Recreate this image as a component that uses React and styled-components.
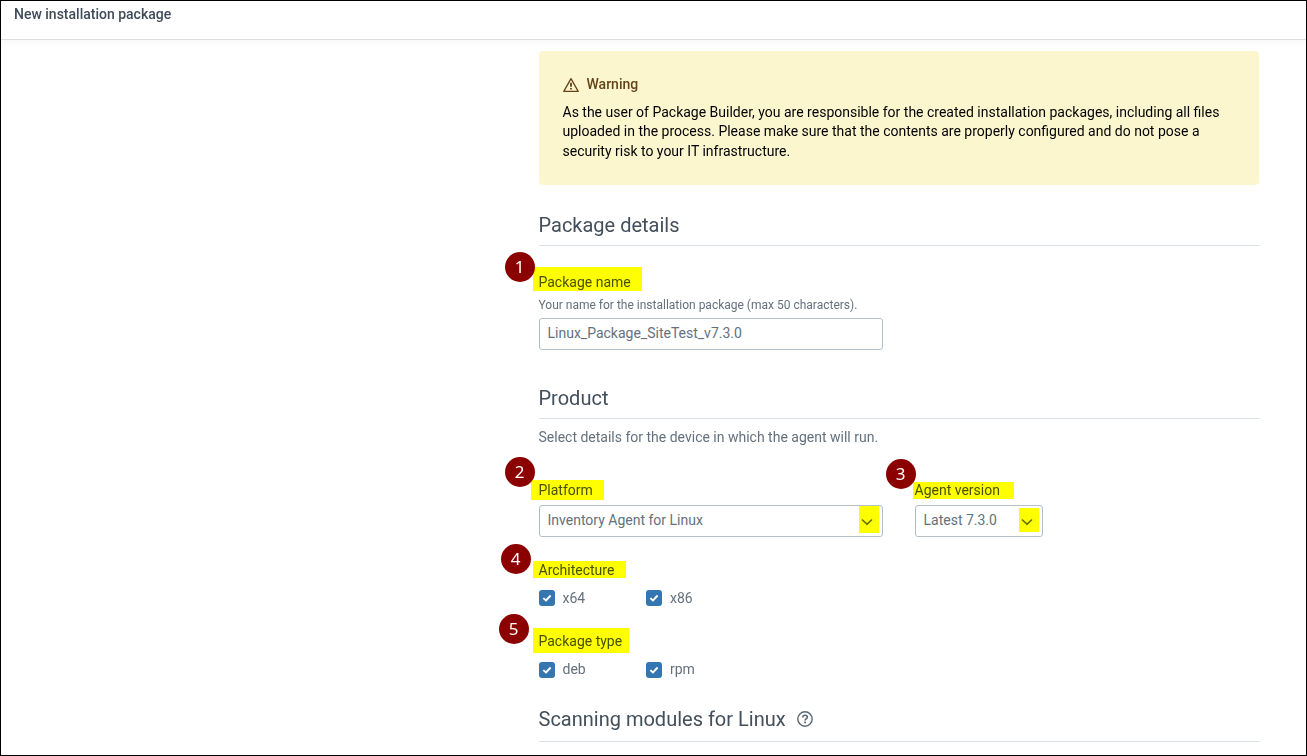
import React from "react";
import styled, { createGlobalStyle } from "styled-components";

const GlobalStyle = createGlobalStyle`
  *, *::before, *::after { box-sizing: border-box; }
  body {
    margin: 0;
    background: #fff;
    font-family: Roboto, "Liberation Sans", sans-serif;
    font-size: 14px;
    line-height: 20px;
    color: #64717d;
  }
`;

const Page = styled.div`
  display: flex;
  flex-direction: column;
  height: 756px;
  overflow: hidden;
  border: 1px solid #000;
  background: #fff;
`;

const Header = styled.header`
  flex: none;
  height: 39px;
  padding: 3px 13px;
  border-bottom: 1px solid #dcdfe1;
  box-shadow: 0 2px 8px rgba(0, 0, 0, 0.04);
  color: #3f4b59;
  font-weight: 500;
`;

const Content = styled.main`
  width: 720px;
  margin-left: 537.5px;
  padding-top: 11px;
`;

const Warning = styled.section`
  height: 134px;
  padding: 24px;
  border-radius: 4px;
  background: #fcf6cf;
  color: #000;
  line-height: 19.6px;
`;

const WarningTitle = styled.div`
  display: flex;
  align-items: center;
  gap: 8px;
  margin-bottom: 8px;
  color: #634319;
  font-weight: 500;

  svg { display: block; }
`;

const WarningText = styled.p`
  margin: 0;
`;

const SectionTitle = styled.h2`
  display: flex;
  align-items: center;
  gap: 11px;
  margin: ${(p) => p.$top}px 0 0;
  padding-bottom: ${(p) => p.$bottom || 6}px;
  border-bottom: 1px solid #d8dfe6;
  color: #434f5a;
  font-size: 20px;
  font-weight: 400;
  line-height: 28px;
`;

const Description = styled.p`
  margin: 8px 0 0;
`;

const Field = styled.div`
  width: ${(p) => p.$width || "auto"};
  margin-top: ${(p) => p.$top || 0}px;
`;

const FieldRow = styled.div`
  display: flex;
  gap: 32px;
  margin-top: 33px;
`;

const Label = styled.div`
  position: relative;
  color: #46525d;
`;

const Hint = styled.div`
  margin-top: 5px;
  font-size: 12px;
  line-height: 16px;
`;

const Control = styled.div`
  position: relative;
  display: flex;
  align-items: center;
  justify-content: space-between;
  width: 100%;
  height: 32px;
  margin-top: 5px;
  padding: 0 8px 2px;
  border: 1px solid #b3bfcb;
  border-radius: 3px;
  background: #fff;
`;

const Chevron = styled.svg`
  display: block;
  margin-top: 3px;
`;

const Options = styled.div`
  display: grid;
  grid-template-columns: 107.5px 107.5px;
  margin-top: ${(p) => p.$top}px;
`;

const Option = styled.div`
  display: flex;
  align-items: flex-start;
  gap: 8px;
`;

const Box = styled.span`
  display: grid;
  place-items: center;
  width: 16px;
  height: 16px;
  margin-top: ${(p) => p.$top}px;
  border-radius: 3px;
  background: #3576b1;
`;

const Highlight = styled.span`
  position: absolute;
  left: ${(p) => p.$x}px;
  top: ${(p) => p.$y}px;
  width: ${(p) => p.$w}px;
  height: ${(p) => p.$h}px;
  background: #ff0;
  mix-blend-mode: multiply;
`;

const Badge = styled.span`
  position: absolute;
  left: ${(p) => p.$x}px;
  top: ${(p) => p.$y}px;
  width: 30px;
  height: 30px;
  border-radius: 50%;
  background: #8b0000;
  color: #fff;
  font: 17px/29px "Noto Sans", "DejaVu Sans", sans-serif;
  text-align: center;
`;

function WarningIcon() {
  return (
    <svg width="16" height="16" viewBox="0 0 16 16" fill="none" stroke="currentColor" strokeLinejoin="round">
      <path d="M8 1.6 15.2 14.4H.8Z" strokeWidth="1.3" />
      <path d="M8 5.8v4M8 10.9v1.7" strokeWidth="1.8" />
    </svg>
  );
}

function HelpIcon() {
  return (
    <svg width="16" height="16" viewBox="0 0 16 16" fill="none" stroke="#596773">
      <circle cx="8" cy="8" r="7.2" strokeWidth="1.4" />
      <path d="M5.8 6.4C5.8 5 6.7 4.2 8 4.2s2.3.8 2.3 2c0 1.6-2.2 1.7-2.2 3.3" strokeWidth="1.6" />
      <path d="M8.1 10.5v1.7" strokeWidth="1.7" />
    </svg>
  );
}

function Arrow() {
  return (
    <Chevron width="14" height="8" viewBox="0 0 14 8" fill="none" stroke="#5b6874" strokeWidth="1.5">
      <path d="M2 1.5 7 6.3l5-4.8" />
    </Chevron>
  );
}

function Check({ boxTop = 2, children }) {
  return (
    <Option>
      <Box $top={boxTop}>
        <svg width="10" height="10" viewBox="0 0 10 10" fill="none" stroke="#fff" strokeWidth="1.9">
          <path d="M1.3 5.1 4 7.5l4.6-5" />
        </svg>
      </Box>
      {children}
    </Option>
  );
}

function MarkedLabel({ number, badge, mark, children }) {
  return (
    <Label>
      {children}
      <Highlight $x={mark[0]} $y={mark[1]} $w={mark[2]} $h={mark[3]} />
      <Badge $x={badge[0]} $y={badge[1]}>{number}</Badge>
    </Label>
  );
}

export default function App() {
  return (
    <>
      <GlobalStyle />
      <Page>
        <Header>New installation package</Header>
        <Content>
          <Warning>
            <WarningTitle><WarningIcon />Warning</WarningTitle>
            <WarningText>
              As the user of Package Builder, you are responsible for the created installation packages, including all files
              uploaded in the process. Please make sure that the contents are properly configured and do not pose a
              security risk to your IT infrastructure.
            </WarningText>
          </Warning>

          <SectionTitle $top={26}>Package details</SectionTitle>
          <Field $top={26} $width="344px">
            <MarkedLabel number={1} badge={[-34, -20.5]} mark={[-6, -5, 109, 24]}>Package name</MarkedLabel>
            <Hint>Your name for the installation package (max 50 characters).</Hint>
            <Control>Linux_Package_SiteTest_v7.3.0</Control>
          </Field>

          <SectionTitle $top={34}>Product</SectionTitle>
          <Description>Select details for the device in which the agent will run.</Description>
          <FieldRow>
            <Field $width="344px">
              <MarkedLabel number={2} badge={[-34, -23.5]} mark={[-8, 0, 73, 20]}>Platform</MarkedLabel>
              <Control>
                Inventory Agent for Linux
                <Arrow />
                <Highlight $x={319} $y={0} $w={20} $h={27} />
              </Control>
            </Field>
            <Field $width="128px">
              <MarkedLabel number={3} badge={[-29, -21.5]} mark={[-2, 2, 101, 17]}>Agent version</MarkedLabel>
              <Control>
                Latest 7.3.0
                <Arrow />
                <Highlight $x={103} $y={2} $w={20} $h={24} />
              </Control>
            </Field>
          </FieldRow>

          <Field $top={23}>
            <MarkedLabel number={4} badge={[-38, -16.5]} mark={[-6, 1, 93, 17]}>Architecture</MarkedLabel>
            <Options $top={8}>
              <Check>x64</Check>
              <Check>x86</Check>
            </Options>
          </Field>
          <Field $top={23}>
            <MarkedLabel number={5} badge={[-40, -17.5]} mark={[-6, -3, 96, 25]}>Package type</MarkedLabel>
            <Options $top={8}>
              <Check boxTop={3}>deb</Check>
              <Check boxTop={3}>rpm</Check>
            </Options>
          </Field>

          <SectionTitle $top={26} $bottom={8}>Scanning modules for Linux <HelpIcon /></SectionTitle>
        </Content>
      </Page>
    </>
  );
}
